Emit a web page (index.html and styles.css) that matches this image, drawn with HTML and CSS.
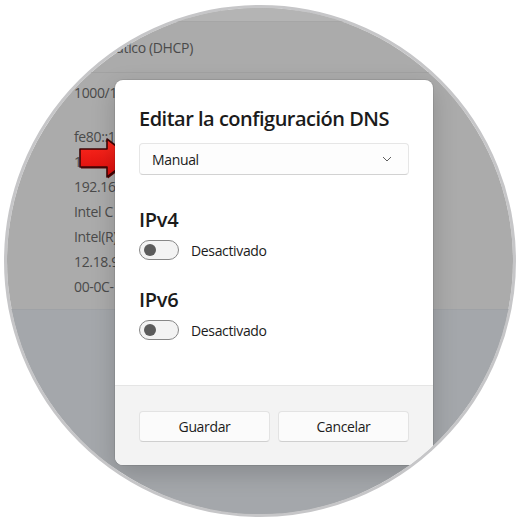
FILE: index.html
```html
<!DOCTYPE html>
<html lang="es">
<head>
    <meta charset="UTF-8">
    <title>Editar la configuración DNS</title>
    <link rel="stylesheet" href="styles.css">
</head>
<body>
    <div class="frame">
        <div class="settings">
            <div class="top-band"></div>
            <div class="dhcp-row">Automático (DHCP)</div>
            <div class="props">
                <div class="prop">1000/1</div>
                <div class="prop gap">fe80::1</div>
                <div class="prop">1</div>
                <div class="prop">192.168</div>
                <div class="prop">Intel C</div>
                <div class="prop">Intel(R)</div>
                <div class="prop">12.18.9</div>
                <div class="prop">00-0C-</div>
            </div>
            <div class="lower"></div>
        </div>

        <svg class="arrow" width="58" height="42" viewBox="0 0 58 42">
            <defs>
                <linearGradient id="red" x1="0" y1="0" x2="0" y2="1">
                    <stop offset="0" stop-color="#ff2b1f"/>
                    <stop offset="1" stop-color="#d90b0b"/>
                </linearGradient>
            </defs>
            <polygon points="2,11 29,11 29,1 54,20 29,39 29,29 2,29" fill="#5b0808" transform="translate(1,1.5)"/>
            <polygon points="2,11 29,11 29,1 54,20 29,39 29,29 2,29" fill="url(#red)" stroke="#3d0606" stroke-width="1.6" stroke-linejoin="round"/>
        </svg>

        <div class="dialog">
            <div class="dialog-body">
                <h1 class="dialog-title">Editar la configuración DNS</h1>
                <div class="select">
                    <span>Manual</span>
                    <svg width="10" height="6" viewBox="0 0 10 6">
                        <path d="M1 1 L5 5 L9 1" fill="none" stroke="#5f5f5f" stroke-width="1"/>
                    </svg>
                </div>

                <h2 class="section-title">IPv4</h2>
                <div class="toggle-row">
                    <div class="toggle"><span class="knob"></span></div>
                    <span>Desactivado</span>
                </div>

                <h2 class="section-title">IPv6</h2>
                <div class="toggle-row">
                    <div class="toggle"><span class="knob"></span></div>
                    <span>Desactivado</span>
                </div>
            </div>
            <div class="dialog-footer">
                <button class="btn">Guardar</button>
                <button class="btn">Cancelar</button>
            </div>
        </div>
    </div>
</body>
</html>
```

FILE: styles.css
```css
* {
    box-sizing: border-box;
}
html, body {
    margin: 0;
    background: #ffffff;
}
body {
    width: 520px;
    height: 520px;
    padding: 5px 0 0 4px;
    font-family: "Segoe UI", "Open Sans", sans-serif;
    letter-spacing: -0.35px;
}
.frame {
    position: relative;
    width: 512px;
    height: 512px;
    border-radius: 50%;
    border: 3px solid #c6c6c8;
    overflow: hidden;
}
.settings {
    display: flex;
    flex-direction: column;
    height: 100%;
    background: #ababab;
    color: #4a4a4a;
    font-size: 14px;
}
.top-band {
    height: 14px;
    background: #b4b4b4;
    border-bottom: 1px solid #a6a6a6;
}
.dhcp-row {
    height: 51px;
    line-height: 52px;
    padding-left: 67px;
    border-bottom: 1px solid #a2a2a2;
}
.props {
    padding: 7px 0 10px 67px;
    white-space: nowrap;
}
.prop {
    height: 25px;
    line-height: 25px;
}
.prop.gap {
    margin-top: 19px;
}
.lower {
    flex: 1;
    background: #a4a7ab;
    border-top: 1px solid #9fa2a6;
}
.arrow {
    position: absolute;
    left: 71px;
    top: 130px;
}
.dialog {
    position: absolute;
    left: 108px;
    top: 72px;
    width: 318px;
    height: 385px;
    display: flex;
    flex-direction: column;
    background: #ffffff;
    border-radius: 8px;
    overflow: hidden;
    box-shadow: 0 0 0 1px rgba(0, 0, 0, 0.08), 0 8px 24px rgba(0, 0, 0, 0.18);
    color: #1b1b1b;
}
.dialog-body {
    flex: 1;
    padding: 25px 24px 0;
}
.dialog-title {
    margin: 0;
    font-size: 20px;
    line-height: 28px;
    font-weight: 600;
    letter-spacing: -0.5px;
}
.select {
    display: flex;
    justify-content: space-between;
    align-items: center;
    width: 270px;
    height: 32px;
    margin-top: 10px;
    padding: 0 16px 0 12px;
    border: 1px solid #e6e6e6;
    border-bottom-color: #d2d2d2;
    border-radius: 4px;
    background: #fdfdfd;
    font-size: 14px;
}
.section-title {
    margin: 0;
    font-size: 20px;
    line-height: 28px;
    font-weight: 600;
    letter-spacing: -0.3px;
}
.select + .section-title {
    margin-top: 31px;
}
.toggle-row + .section-title {
    margin-top: 26px;
}
.section-title + .toggle-row {
    margin-top: 6px;
}
.toggle-row {
    display: flex;
    align-items: center;
    gap: 12px;
    font-size: 14px;
}
.toggle {
    display: flex;
    align-items: center;
    width: 40px;
    height: 20px;
    padding-left: 4px;
    border: 1px solid #878787;
    border-radius: 10px;
    background: #f3f3f3;
}
.knob {
    width: 12px;
    height: 12px;
    border-radius: 50%;
    background: #5c5c5c;
}
.dialog-footer {
    display: grid;
    grid-template-columns: 1fr 1fr;
    gap: 8px;
    height: 80px;
    padding: 25px 24px 0;
    background: #f3f3f3;
    border-top: 1px solid #e5e5e5;
}
.btn {
    height: 31px;
    border: 1px solid #e3e3e3;
    border-bottom-color: #cfcfcf;
    border-radius: 4px;
    background: #fbfbfb;
    color: #1b1b1b;
    font-family: inherit;
    font-size: 14px;
    letter-spacing: -0.35px;
}
```
